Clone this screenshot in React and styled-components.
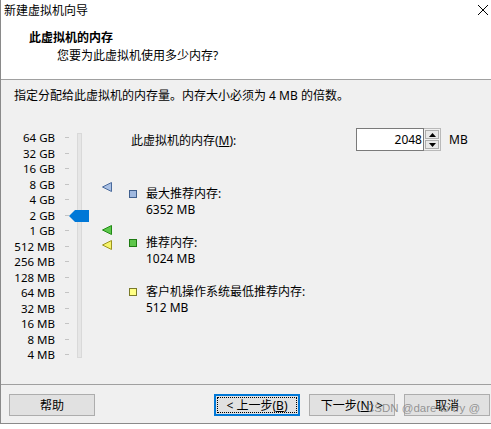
import React from 'react'
import styled, { createGlobalStyle } from 'styled-components'

const GlobalStyle = createGlobalStyle`
  body {
    margin: 0;
    background: #fff;
    font-family: "Noto Sans", "Noto Sans CJK SC", sans-serif;
    font-size: 12px;
    color: #000;
  }
`

const SCALE = ['64 GB', '32 GB', '16 GB', '8 GB', '4 GB', '2 GB', '1 GB', '512 MB', '256 MB', '128 MB', '64 MB', '32 MB', '16 MB', '8 MB', '4 MB']

// marker tops are relative to the slider box
const MARKERS = [
  { top: 54, fill: '#a9c0e4', stroke: '#4a6a9c' },
  { top: 97, fill: '#5cc84a', stroke: '#228a16' },
  { top: 112, fill: '#f6f46a', stroke: '#9c9420' }
]

const LEGEND = [
  { label: '最大推荐内存:', value: '6352 MB', fill: '#9fb8df', stroke: '#3f5f8e' },
  { label: '推荐内存:', value: '1024 MB', fill: '#5ec64b', stroke: '#1e7a12' },
  { label: '客户机操作系统最低推荐内存:', value: '512 MB', fill: '#ffff84', stroke: '#7a7a2a' }
]

const Window = styled.div`
  width: 491px;
  height: 424px;
  box-sizing: border-box;
  border-left: 1px solid #8a8a8a;
  border-bottom: 1px solid #8a8a8a;
  background: #f0f0f0;
  display: flex;
  flex-direction: column;
  position: relative;
`

const Header = styled.div`
  height: 79px;
  background: #fff;
  border-bottom: 1px solid #a0a0a0;
  display: flex;
  flex-direction: column;
`

const TitleBar = styled.div`
  height: 20px;
  display: flex;
  align-items: center;
  justify-content: space-between;
  padding: 0 2px 0 3px;
  font-size: 12px;
`

const Heading = styled.div`
  margin: 9px 0 0 28px;
  font-weight: bold;
  line-height: 18px;
`

const SubHeading = styled.div`
  margin-left: 56px;
  line-height: 18px;
`

const Body = styled.div`
  flex: 1;
  display: flex;
  flex-direction: column;
`

const Description = styled.div`
  margin: 8px 0 0 13px;
  line-height: 16px;
`

const Main = styled.div`
  margin-top: 24px;
  display: flex;
`

const SliderBox = styled.div`
  width: 128px;
  display: flex;
  position: relative;
  padding-top: 2px;
`

const Labels = styled.div`
  width: 54px;
  text-align: right;
  display: flex;
  flex-direction: column;
`

const ScaleRow = styled.div`
  height: 15.5px;
  line-height: 15.5px;
  white-space: nowrap;
  font-size: 11.5px;
`

const Ticks = styled.div`
  margin-left: 10px;
  display: flex;
  flex-direction: column;
`

const Tick = styled.div`
  height: 15.5px;
  display: flex;
  align-items: center;
  &::before {
    content: '';
    width: 4px;
    height: 1px;
    background: #c4c4c4;
  }
`

const Track = styled.div`
  margin: 3px 0 0 8px;
  width: 3px;
  height: 223px;
  border: 1px solid #d9d9d9;
  background: #e6e6e6;
`

const Thumb = styled.svg`
  position: absolute;
  left: 68px;
  top: 82px;
`

const Marker = styled.svg`
  position: absolute;
  left: 101px;
  top: ${p => p.$top}px;
`

const RightCol = styled.div`
  flex: 1;
  display: flex;
  flex-direction: column;
`

const MemoryRow = styled.div`
  height: 23px;
  display: flex;
  align-items: center;
  padding-left: 2px;
`

const MemoryLabel = styled.div`
  width: 225px;
`

const SpinBox = styled.div`
  display: flex;
  height: 23px;
`

const SpinInput = styled.div`
  border: 1px solid #7a7a7a;
  background: #fff;
  text-align: right;
  line-height: 21px;
  padding-right: 1px;
  width: 65px;
`

const SpinButtons = styled.div`
  width: 17px;
  display: flex;
  flex-direction: column;
  border: 1px solid #b9b9b9;
  border-left: none;
  box-sizing: border-box;
  padding: 1px;
  gap: 1px;
`

const SpinButton = styled.div`
  flex: 1;
  border: 1px solid #adadad;
  background: #e8e8e8;
  display: flex;
  align-items: center;
  justify-content: center;
`

const Unit = styled.div`
  margin-left: 8px;
`

const Legend = styled.div`
  margin-top: 35px;
  display: flex;
  flex-direction: column;
  gap: 17px;
`

const LegendItem = styled.div`
  display: flex;
  line-height: 16px;
`

const Swatch = styled.div`
  width: 6px;
  height: 6px;
  margin-top: 4px;
  border: 1px solid ${p => p.$stroke};
  background: ${p => p.$fill};
`

const LegendText = styled.div`
  margin-left: 9px;
`

const Footer = styled.div`
  height: 39px;
  border-top: 1px solid #a0a0a0;
  display: flex;
  align-items: flex-start;
  padding: 9px 0 0 8px;
  box-sizing: border-box;
`

const Button = styled.div`
  width: 86px;
  height: 22px;
  box-sizing: border-box;
  border: ${p => (p.$focused ? '2px solid #0078d7' : '1px solid #adadad')};
  background: #e1e1e1;
  display: flex;
  align-items: center;
  justify-content: center;
  margin-left: ${p => p.$gap || 0}px;
  position: relative;
  &::after {
    content: '';
    display: ${p => (p.$focused ? 'block' : 'none')};
    position: absolute;
    inset: 1px;
    border: 1px dotted #000;
  }
`

const U = styled.span`
  text-decoration: underline;
`

const Watermark = styled.div`
  position: absolute;
  left: 365px;
  top: 402px;
  font-family: "Liberation Sans", sans-serif;
  font-size: 11.5px;
  color: rgba(120, 120, 120, 0.75);
  white-space: nowrap;
`

const Close = () => (
  <svg width="12" height="12" viewBox="0 0 12 12">
    <path d="M1 1 L11 11 M11 1 L1 11" stroke="#000" strokeWidth="1" />
  </svg>
)

const Arrow = ({ up }) => (
  <svg width="7" height="4" viewBox="0 0 7 4">
    <path d={up ? 'M0 4 L3.5 0 L7 4 Z' : 'M0 0 L3.5 4 L7 0 Z'} fill="#000" />
  </svg>
)

export default function App() {
  return (
    <>
      <GlobalStyle />
      <Window>
        <Header>
          <TitleBar>
            <span>新建虚拟机向导</span>
            <Close />
          </TitleBar>
          <Heading>此虚拟机的内存</Heading>
          <SubHeading>您要为此虚拟机使用多少内存?</SubHeading>
        </Header>
        <Body>
          <Description>指定分配给此虚拟机的内存量。内存大小必须为 4 MB 的倍数。</Description>
          <Main>
            <SliderBox>
              <Labels>
                {SCALE.map(s => <ScaleRow key={s}>{s}</ScaleRow>)}
              </Labels>
              <Ticks>
                {SCALE.map(s => <Tick key={s} />)}
              </Ticks>
              <Track />
              <Thumb width="20" height="12" viewBox="0 0 20 12">
                <path d="M0 6 L6 0 L20 0 L20 12 L6 12 Z" fill="#0078d7" />
              </Thumb>
              {MARKERS.map(m => (
                <Marker key={m.top} $top={m.top} width="10" height="10" viewBox="0 0 10 10">
                  <path d="M0.5 5 L9.5 0.5 L9.5 9.5 Z" fill={m.fill} stroke={m.stroke} strokeWidth="1" />
                </Marker>
              ))}
            </SliderBox>
            <RightCol>
              <MemoryRow>
                <MemoryLabel>此虚拟机的内存(<U>M</U>):</MemoryLabel>
                <SpinBox>
                  <SpinInput>2048</SpinInput>
                  <SpinButtons>
                    <SpinButton><Arrow up /></SpinButton>
                    <SpinButton><Arrow /></SpinButton>
                  </SpinButtons>
                </SpinBox>
                <Unit>MB</Unit>
              </MemoryRow>
              <Legend>
                {LEGEND.map(l => (
                  <LegendItem key={l.label}>
                    <Swatch $fill={l.fill} $stroke={l.stroke} />
                    <LegendText>
                      <div>{l.label}</div>
                      <div>{l.value}</div>
                    </LegendText>
                  </LegendItem>
                ))}
              </Legend>
            </RightCol>
          </Main>
        </Body>
        <Footer>
          <Button>帮助</Button>
          <Button $gap={119} $focused>&lt; 上一步(<U>B</U>)</Button>
          <Button $gap={9}>下一步(<U>N</U>) &gt;</Button>
          <Button $gap={9}>取消</Button>
        </Footer>
        <Watermark>CSDN @dare to try @</Watermark>
      </Window>
    </>
  )
}
